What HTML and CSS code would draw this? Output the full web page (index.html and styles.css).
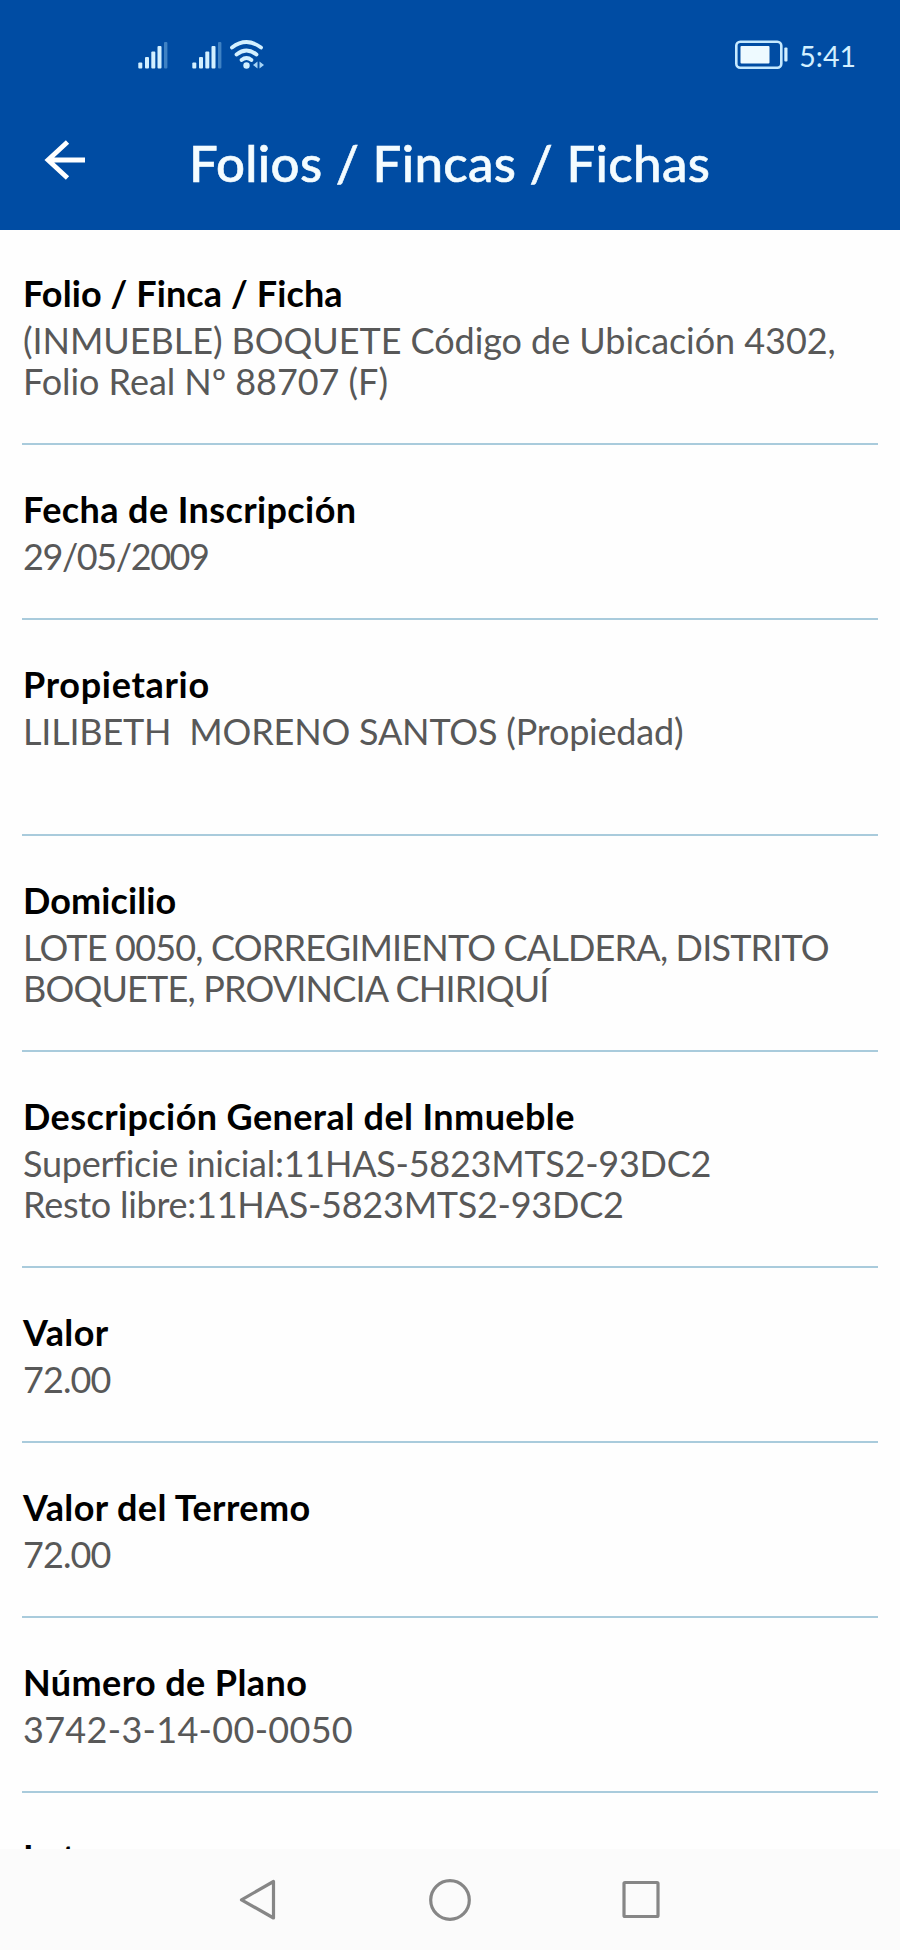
FILE: index.html
```
<!DOCTYPE html>
<html lang="es">
<head>
  <meta charset="UTF-8" />
  <title>Folios / Fincas / Fichas</title>
  <meta name="viewport" content="width=device-width, initial-scale=1.0"/>
  <link rel="stylesheet" href="styles.css">
</head>
<body>

<header class="header">
  <div class="status-bar">
    <svg class="status-icons" width="126" height="30" viewBox="138 40 126 30">
      <g fill="#d3f0ff">
        <rect x="138.3" y="62.5" width="4" height="6" rx="1"/>
        <rect x="145" y="57" width="4" height="11.5" rx="1"/>
        <rect x="151.3" y="51.5" width="4" height="17" rx="1"/>
        <rect x="157.5" y="46" width="4" height="22.5" rx="1"/>
        <rect x="192.3" y="62.5" width="4" height="6" rx="1"/>
        <rect x="199" y="57" width="4" height="11.5" rx="1"/>
        <rect x="205.3" y="51.5" width="4" height="17" rx="1"/>
        <rect x="211.5" y="46" width="4" height="22.5" rx="1"/>
      </g>
      <g fill="#3f82c4">
        <rect x="164" y="42" width="3.4" height="26.5" rx="1"/>
        <rect x="218" y="42" width="3.4" height="26.5" rx="1"/>
      </g>
      <g fill="none" stroke="#d3f0ff" stroke-width="3.8" stroke-linecap="round">
        <path d="M232 47.5Q246.5 36.5 261 47.5"/>
        <path d="M236.5 54.5Q246.5 46.500 256.5 54.5"/>
        <path d="M241.5 60Q246.5 56 251.5 60"/>
      </g>
      <circle cx="246.5" cy="65.5" r="3.2" fill="#d3f0ff"/>
      <path d="M257.5 61.5v7l-4.500-3.5zM259.5 61.5v7l4.5-3.5z" fill="#a5d3f5"/>
    </svg>
    <div class="status-right">
      <svg width="54" height="30" viewBox="735 41 54 30">
        <rect x="737.3" y="42.8" width="45" height="26" rx="4" fill="none" stroke="#c5e9ff" stroke-width="2.6"/>
        <rect x="741.5" y="47" width="29" height="17.5" rx="1" fill="#eefaff"/>
        <rect x="785.3" y="48.5" width="3.2" height="14" rx="1" fill="#d3f0ff"/>
      </svg>
      <span class="clock">5:41</span>
    </div>
  </div>
  <div class="title-bar">
    <svg class="back" width="42" height="42" viewBox="0 0 42 42">
      <path d="M41 21H4M23.5 3L4 21L23.5 39" fill="none" stroke="#fff" stroke-width="4.8"/>
    </svg>
    <h1>Folios / Fincas / Fichas</h1>
  </div>
</header>

<main class="content">
  <section class="item">
    <h2 class="ls-2">Folio / Finca / Ficha</h2>
    <p class="folio">(INMUEBLE) BOQUETE Código de Ubicación 4302,<br/>Folio Real Nº 88707 (F)</p>
  </section>
  <section class="item">
    <h2>Fecha de Inscripción</h2>
    <p class="date">29/05/2009</p>
  </section>
  <section class="item">
    <h2 class="ls-7">Propietario</h2>
    <p class="owner">LILIBETH  MORENO SANTOS (Propiedad)</p>
  </section>
  <section class="item">
    <h2 class="ls-2">Domicilio</h2>
    <p class="address">LOTE 0050, CORREGIMIENTO CALDERA, DISTRITO<br/>BOQUETE, PROVINCIA CHIRIQUÍ</p>
  </section>
  <section class="item">
    <h2>Descripción General del Inmueble</h2>
    <p class="area">Superficie inicial:11HAS-5823MTS2-93DC2<br/>Resto libre:11HAS-5823MTS2-93DC2</p>
  </section>
  <section class="item">
    <h2>Valor</h2>
    <p class="amount">72.00</p>
  </section>
  <section class="item">
    <h2>Valor del Terremo</h2>
    <p class="amount">72.00</p>
  </section>
  <section class="item">
    <h2>Número de Plano</h2>
    <p class="plan">3742-3-14-00-0050</p>
  </section>
  <section class="item">
    <h2>Lote</h2>
  </section>
</main>

<nav class="nav-bar">
  <svg width="44" height="44" viewBox="0 0 44 44"><path d="M36.5 3.5V40L4.5 21.8Z"/></svg>
  <svg width="44" height="44" viewBox="0 0 44 44"><circle cx="22" cy="22" r="19.3"/></svg>
  <svg width="44" height="44" viewBox="0 0 44 44"><rect x="5" y="4.5" width="34" height="34" rx="1"/></svg>
</nav>

</body>
</html>
```
FILE: styles.css
```
* {
  box-sizing: border-box;
}

body {
  margin: 0;
  height: 1950px;
  display: flex;
  flex-direction: column;
  overflow: hidden;
  font-family: Lato, "Open Sans", sans-serif;
  background-color: #fefefe;
  color: #000;
}

h1, h2, p {
  margin: 0;
}

.header {
  flex: none;
  height: 230px;
  background-color: #004ca3;
  color: #f4fcff;
}

.status-bar {
  height: 110px;
  padding: 0 44px 0 138px;
  display: flex;
  justify-content: space-between;
  align-items: center;
}

.status-right {
  display: flex;
  align-items: center;
  gap: 11px;
}

.clock {
  margin-top: 2px;
  font-size: 28.5px;
  line-height: 34px;
  color: #d3f0ff;
}

.title-bar {
  height: 110px;
  padding-left: 44px;
  display: flex;
  align-items: center;
}

.back {
  margin-top: -10px;
}

h1 {
  margin: -4px 0 0 103px;
  font-size: 51px;
  font-weight: 500;
  letter-spacing: 0.35px;
  line-height: 60px;
  -webkit-text-stroke: 0.6px #f4fcff;
}

.content {
  flex: 1;
  min-height: 0;
  overflow: hidden;
  padding: 0 22px;
}

.item {
  padding: 41px 0 41px 1px;
  border-bottom: 2px solid #a9cbdc;
}

.item:first-child {
  padding-top: 40px;
}

h2 {
  margin-bottom: 3px;
  font-size: 36px;
  font-weight: 700;
  line-height: 47px;
  letter-spacing: 0.4px;
}

.ls-2 {
  letter-spacing: 0.1px;
}

.ls-7 {
  letter-spacing: 0.7px;
}

.item p {
  font-size: 36px;
  line-height: 41px;
  color: #585858;
  white-space: pre;
}

.item .folio {
  letter-spacing: -0.06px;
}

.item .date {
  letter-spacing: -1.4px;
}

.item .owner {
  min-height: 82px;
  letter-spacing: -0.2px;
}

.item .address {
  letter-spacing: -0.82px;
}

.item .area {
  letter-spacing: -0.25px;
}

.item .amount {
  letter-spacing: -0.9px;
}

.item .plan {
  letter-spacing: 0.3px;
}

.nav-bar {
  flex: none;
  height: 101px;
  display: flex;
  justify-content: center;
  align-items: center;
  gap: 147px;
  background-color: #fbfbfb;
}

.nav-bar svg {
  fill: none;
  stroke: #868686;
  stroke-width: 3.2;
  stroke-linejoin: round;
}
```
